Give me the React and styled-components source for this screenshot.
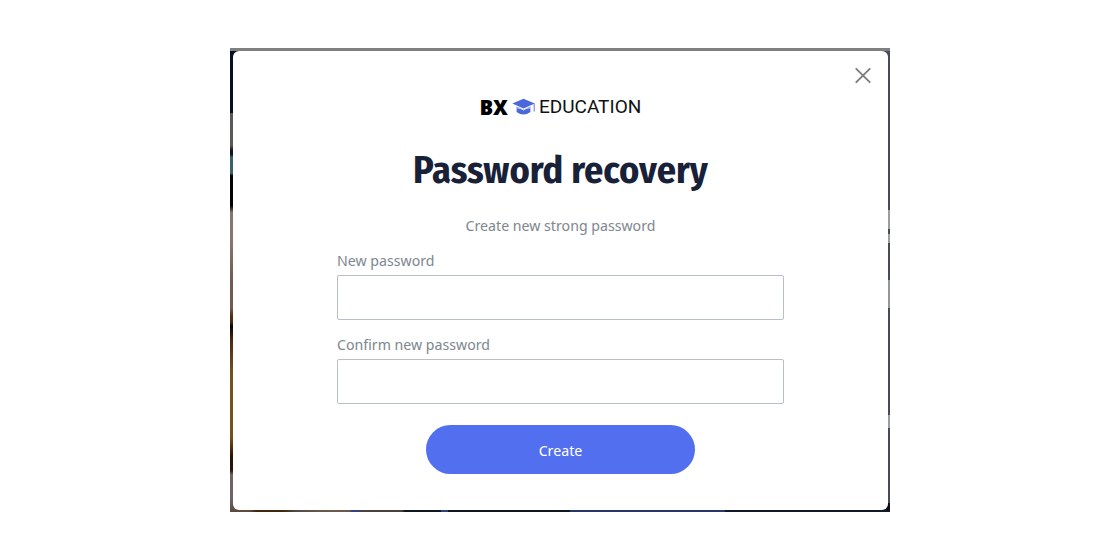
import React from "react";
import styled, { createGlobalStyle } from "styled-components";

const GlobalStyle = createGlobalStyle`
  * { box-sizing: border-box; }
  body {
    margin: 0;
    background: #fff;
    font-family: "Noto Sans Display", "Noto Sans", sans-serif;
    font-size: 15px;
    line-height: 20px;
    color: #7f8991;
  }
`;

const Page = styled.main`
  min-height: 100vh;
  display: flex;
  align-items: center;
  justify-content: center;
`;

/* Slivers of the dimmed page that show round the dialog. */
const Backdrop = styled.div`
  width: 100%;
  max-width: 660px;
  padding: 3px 2px 2px 3px;
  background:
    linear-gradient(#808080, #808080) top / 100% 3px no-repeat,
    linear-gradient(90deg, #5f4a40 0 3%, #40280f 4% 8%, #4c4c46 10%, #6b5a4c 14% 18%,
      #33427c 18.5% 19.5%, #4a443c 20% 26%, #10181f 26.5% 32%, #33427c 32% 33%, #10181f 33%
      51.5%, #28366a 51.5% 75%, #121a2a 75%)
      bottom / 100% 2px no-repeat,
    linear-gradient(#051020 0 14%, #5d5855 14% 21%, #15181a 22% 23%, #39636c 23.5% 27%,
      #030303 27.5% 34%, #86766e 35.5% 42%, #735a50 50% 56%, #4a2a1b 58% 59%, #0d0504 60%,
      #4a2c14 63%, #76501f 70% 84%, #2b1409 88% 91%, #6d6467 92% 97%, #5a4a48)
      left / 50% 100% no-repeat,
    linear-gradient(#454b59 0 35%, #9b9e9e 35% 39%, #454b59 39% 40%, #9b9e9e 40% 42%,
      #454b59 42% 50%, #959797 50% 56%, #454b59 56% 79%, #9b9e9e 79% 82%, #454b59 82% 98%,
      #080e1e 98%) right / 50% 100% no-repeat;
`;

const Dialog = styled.section`
  background: #fff;
  border-radius: 6px;
  display: flex;
  flex-direction: column;
  padding-bottom: 36px;
`;

const TopBar = styled.header`
  display: flex;
  justify-content: flex-end;
  padding: 12px 13px 0;
`;

const CloseButton = styled.button`
  width: 24px;
  height: 24px;
  padding: 0;
  border: 0;
  background: none;
  color: #7d7d7d;
  cursor: pointer;

  svg { display: block; }
`;

const Logo = styled.div`
  display: flex;
  align-items: center;
  justify-content: center;
  gap: 4px;
  height: 24px;
  margin-top: 8px;
  font-family: Roboto, sans-serif;
  font-size: 19px;
  line-height: 24px;
  color: #111;

  b {
    font-family: "Noto Sans Display", Inter, sans-serif;
    font-size: 21px;
    font-weight: 900;
    color: #000;
  }
`;

const Title = styled.h1`
  margin: 27px 0 0;
  text-align: center;
  font-family: "Fira Sans Condensed", Roboto, sans-serif;
  font-size: 38px;
  line-height: 48px;
  font-weight: 700;
  color: #182137;
`;

const Subtitle = styled.p`
  margin: 21px 0 0;
  text-align: center;
`;

const Form = styled.form`
  display: flex;
  flex-direction: column;
  gap: 14px;
  padding: 15px 104px 0;
`;

const Field = styled.div`
  display: flex;
  flex-direction: column;
  gap: 5px;
`;

const Input = styled.input`
  width: 100%;
  height: 45px;
  padding: 0 12px;
  border: 1px solid #b9bfc8;
  border-radius: 2px;
  background: #fff;
  font: inherit;
  color: #182137;
`;

const SubmitButton = styled.button`
  align-self: center;
  width: 60%;
  height: 49px;
  margin-top: 7px;
  border: 0;
  border-radius: 25px;
  background: #516fee;
  font: inherit;
  color: #fff;
  cursor: pointer;
`;

function CapIcon() {
  return (
    <svg width="23" height="18" viewBox="0 0 23 18" aria-hidden="true">
      <path d="M0.3 5.6 L11.5 0.8 L22.8 5.6 L11.5 10.6 Z" fill="#4a68dc" />
      <path d="M4.6 8.6 L11.5 11.6 L18.4 8.6 V14 Q15 16.6 11.5 16.6 Q8 16.6 4.6 14 Z" fill="#4a68dc" />
      <path d="M4.6 9.8 Q8.5 9.8 11.5 12 Q14.5 9.8 18.4 9.8" fill="none" stroke="#fff" strokeWidth="0.8" />
      <path d="M22.2 5.6 V13.5" stroke="#4a68dc" strokeWidth="0.9" />
    </svg>
  );
}

function PasswordField({ id, label }) {
  return (
    <Field>
      <label htmlFor={id}>{label}</label>
      <Input id={id} type="password" autoComplete="new-password" />
    </Field>
  );
}

export default function App() {
  return (
    <Page>
      <GlobalStyle />
      <Backdrop>
        <Dialog role="dialog" aria-labelledby="title">
          <TopBar>
            <CloseButton type="button" aria-label="Close">
              <svg width="24" height="24" viewBox="0 0 24 24">
                <path d="M5.3 5.8 L18.7 19.2 M18.7 5.8 L5.3 19.2" stroke="currentColor" strokeWidth="1.9" strokeLinecap="round" />
              </svg>
            </CloseButton>
          </TopBar>
          <Logo>
            <b>BX</b>
            <CapIcon />
            <span>EDUCATION</span>
          </Logo>
          <Title id="title">Password recovery</Title>
          <Subtitle>Create new strong password</Subtitle>
          <Form onSubmit={(event) => event.preventDefault()}>
            <PasswordField id="new-password" label="New password" />
            <PasswordField id="confirm-password" label="Confirm new password" />
            <SubmitButton type="submit">Create</SubmitButton>
          </Form>
        </Dialog>
      </Backdrop>
    </Page>
  );
}
